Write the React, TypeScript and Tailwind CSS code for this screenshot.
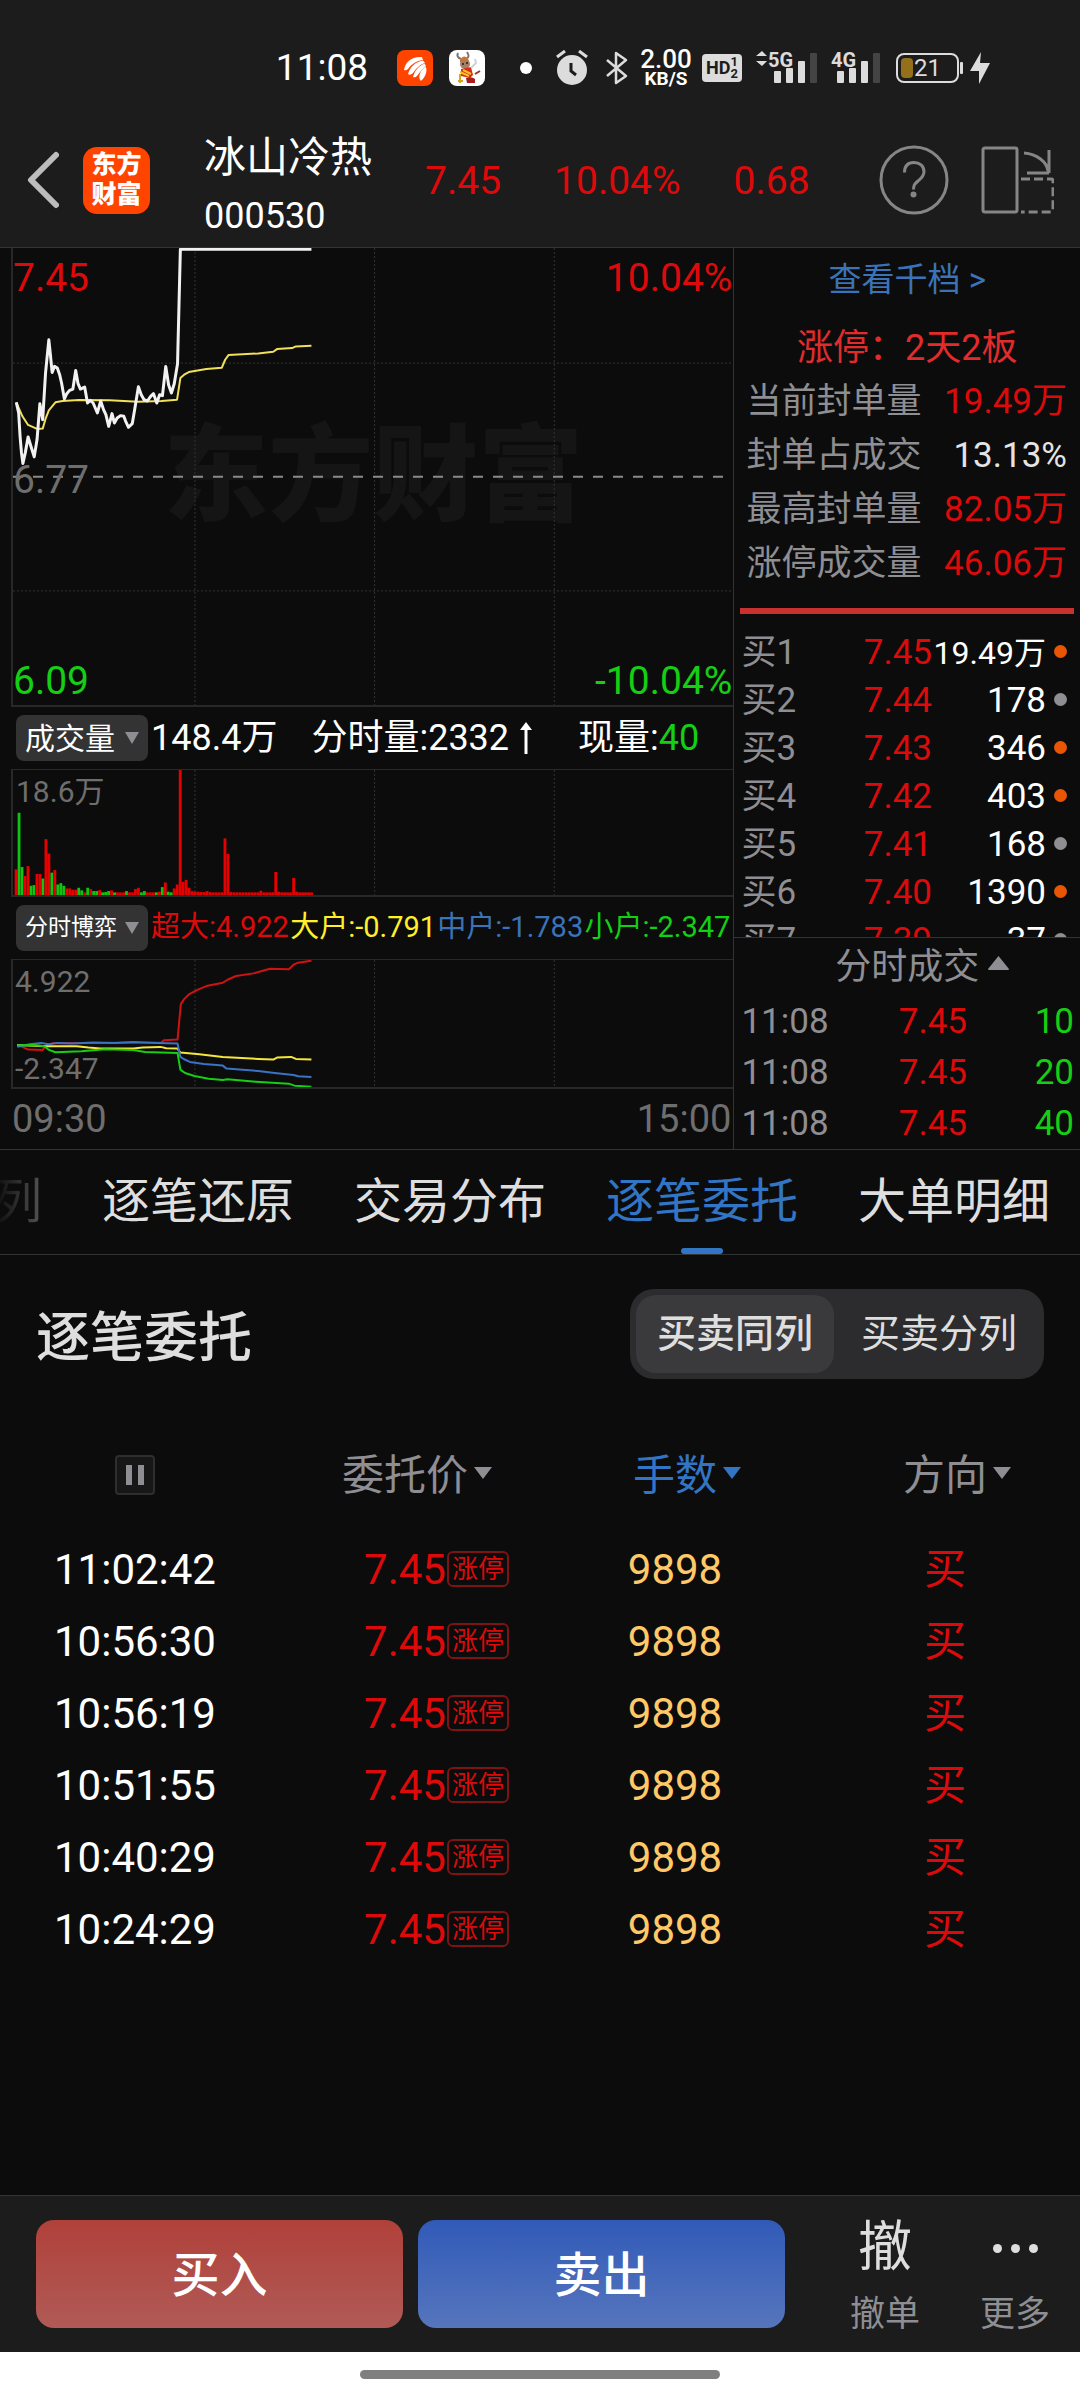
import React, { useState } from "react";

type Point = [number, number];

const PRICE: Point[] = [
  [32, 488], [37, 520], [40, 590], [43, 640], [46, 672], [51, 640], [57, 592], [63, 620], [70, 652], [76, 600],
  [82, 492], [88, 540], [94, 400], [101, 300], [104, 340], [108, 398], [113, 380], [119, 385], [124, 405], [128, 430],
  [134, 478], [139, 462], [145, 452], [152, 448], [158, 392], [163, 432], [168, 448], [177, 442], [183, 490],
  [189, 482], [195, 490], [204, 520], [211, 484], [217, 510], [222, 525], [228, 560], [235, 522], [240, 550],
  [246, 535], [253, 528], [260, 530], [264, 545], [270, 563], [278, 552], [283, 510], [291, 441], [297, 465],
  [303, 480], [310, 484], [317, 470], [323, 462], [330, 490], [336, 465], [342, 468], [349, 380], [355, 435],
  [361, 460], [367, 432], [374, 372], [380, 28], [658, 28],
];

const AVERAGE: Point[] = [
  [32, 488], [45, 530], [57, 556], [76, 568], [88, 567], [94, 538], [101, 512], [115, 488], [130, 484], [165, 481],
  [230, 482], [290, 486], [340, 484], [373, 480], [380, 415], [388, 405], [398, 397], [435, 388], [468, 384],
  [475, 360], [482, 346], [545, 341], [577, 336], [585, 328], [617, 325], [625, 320], [658, 318],
];

const SUPER_LARGE: Point[] = [
  [34, 1062], [45, 1068], [57, 1076], [88, 1077], [95, 1064], [110, 1057], [340, 1055], [345, 1048], [374, 1046],
  [377, 1000], [381, 940], [388, 925], [398, 911], [415, 898], [435, 886], [470, 876], [480, 867], [498, 856],
  [535, 848], [555, 840], [570, 834], [610, 836], [620, 822], [630, 816], [658, 810],
];

const LARGE: Point[] = [
  [34, 1062], [95, 1066], [160, 1066], [185, 1070], [210, 1073], [280, 1073], [300, 1070], [338, 1068], [350, 1072],
  [374, 1073], [380, 1085], [420, 1090], [470, 1098], [510, 1101], [545, 1104], [577, 1106], [585, 1100], [615, 1098],
  [625, 1104], [658, 1106],
];

const MEDIUM: Point[] = [
  [34, 1068], [60, 1060], [85, 1056], [100, 1060], [120, 1056], [150, 1058], [195, 1055], [240, 1056], [280, 1053],
  [330, 1056], [374, 1058], [380, 1098], [388, 1105], [400, 1113], [430, 1119], [470, 1124], [478, 1133], [545, 1140],
  [580, 1146], [620, 1152], [630, 1156], [658, 1158],
];

const SMALL: Point[] = [
  [34, 1063], [70, 1062], [92, 1066], [100, 1076], [115, 1084], [170, 1081], [220, 1075], [280, 1077], [305, 1083],
  [374, 1086], [380, 1136], [390, 1146], [410, 1155], [440, 1163], [470, 1167], [480, 1165], [540, 1172], [610, 1178],
  [622, 1184], [658, 1187],
];

const VOLUME =
  "r78 g250 g85 r58 r88 g28 g30 r64 r64 g50 r170 r126 g68 r76 g32 g36 g28 r20 r20 r16 r16 g22 g14 r8 g22 r18 g12 g12 r15 g8 g9 g12 r14 g8 r8 r8 r8 g12 r8 r8 r18 r22 g8 g12 r8 r8 r8 g8 r10 g24 r38 g10 g8 r20 r32 r380 r40 r46 r22 r12 r10 r10 r9 r9 r12 r9 r8 r8 r8 r8 r172 r125 r9 r8 r8 r8 r8 r8 r8 r8 r8 r8 r13 r8 r8 r8 r8 r70 r10 r8 r8 r8 r8 r52 r10 r8 r8 r8 r8 r8"
    .split(" ")
    .map((s) => ({ up: s[0] === "r", h: Number(s.slice(1)) }));

const SEAL_STATS = [
  { label: "当前封单量", value: "19.49万", tone: "text-[#dc0a0a]" },
  { label: "封单占成交", value: "13.13%", tone: "text-[#e4e4e4]" },
  { label: "最高封单量", value: "82.05万", tone: "text-[#dc0a0a]" },
  { label: "涨停成交量", value: "46.06万", tone: "text-[#dc0a0a]" },
];

const BIDS = [
  { label: "买1", price: "7.45", qty: "19.49万", hot: true },
  { label: "买2", price: "7.44", qty: "178", hot: false },
  { label: "买3", price: "7.43", qty: "346", hot: true },
  { label: "买4", price: "7.42", qty: "403", hot: true },
  { label: "买5", price: "7.41", qty: "168", hot: false },
  { label: "买6", price: "7.40", qty: "1390", hot: true },
  { label: "买7", price: "7.39", qty: "37", hot: false },
];

const TRADES = ["10", "20", "40"];
const ORDERS = ["11:02:42", "10:56:30", "10:56:19", "10:51:55", "10:40:29", "10:24:29"];
const TABS = ["逐笔还原", "交易分布", "逐笔委托", "大单明细"];

const toPoints = (series: Point[]) => series.map((p) => p.join(",")).join(" ");

function Line({ series, color, width = 2 }: { series: Point[]; color: string; width?: number }) {
  return (
    <polyline
      points={toPoints(series)}
      fill="none"
      stroke={color}
      strokeWidth={width}
      strokeLinejoin="round"
      vectorEffect="non-scaling-stroke"
    />
  );
}

function GridColumns({ top, bottom }: { top: number; bottom: number }) {
  return (
    <g stroke="#333333" strokeDasharray="2 2">
      {[411, 792, 1173].map((x) => (
        <line key={x} x1={x} x2={x} y1={top} y2={bottom} vectorEffect="non-scaling-stroke" />
      ))}
    </g>
  );
}

function Caret({ className, up = false }: { className: string; up?: boolean }) {
  return (
    <svg className={className} viewBox="0 0 20 14" preserveAspectRatio="none" fill="currentColor" aria-hidden="true">
      <path d={up ? "M10 0L20 13Q20 14 19 14H1Q0 14 0 13Z" : "M0 0H20L10 14Z"} />
    </svg>
  );
}

function Signal({ label, arrows = false }: { label: string; arrows?: boolean }) {
  return (
    <svg className="h-9 w-[62px] overflow-visible" viewBox="0 0 62 36" fill="#dcdcdc" aria-label={label}>
      {arrows && <path d="M0 6L6 1L11 6ZM0 11H11L6 16Z" />}
      <text x="12" y="17" fontSize="20" fontWeight="700" fontFamily="Roboto, sans-serif">
        {label}
      </text>
      <rect x="18" y="21" width="7" height="12" rx="1" />
      <rect x="30" y="18" width="7" height="15" rx="1" />
      <rect x="42" y="11" width="7" height="22" rx="1" />
      <rect x="54" y="3" width="7" height="30" rx="1" fill="#444444" />
    </svg>
  );
}

function StatusBar() {
  return (
    <div className="flex h-[129px] items-center justify-end pt-[7px] pr-[90px] text-white">
      <span className="text-[37px] leading-10">11:08</span>
      <svg className="ml-[29px] size-9" viewBox="0 0 36 36" aria-hidden="true">
        <rect width="36" height="36" rx="8" fill="#ff4400" />
        <g fill="#fff">
          <path d="M7 20C8 12 15 6 25 7L26 10C18 11 14 15 11 19Q9 21 7 20Z" />
          <path d="M11 24C13 17 18 12 26 10.500L28 13C22 15 19 19 16 23Q13 26 11 24Z" />
          <path d="M16 27C18 20 22 16 27.500 13.500L29 16C25 19 23 22 20 26Q18 28 16 27Z" />
          <path d="M23 30C21 25 24 20 28.500 16.500C31 21 28 27 25 30Q24 31 23 30Z" />
        </g>
      </svg>
      <svg className="ml-4 size-9" viewBox="0 0 36 36" aria-hidden="true">
        <rect width="36" height="36" rx="8" fill="#fff" />
        <path d="M12 9Q7 7 9 3M18 8Q21 7 18 2" stroke="#77767c" strokeWidth="2" fill="none" />
        <path d="M11 10Q14 4 19 8L20 12H11Z" fill="#d8731d" />
        <circle cx="16" cy="14" r="5" fill="#a57f63" />
        <path d="M13 14H15M17 13H19" stroke="#2b1d18" strokeWidth="1.5" />
        <path d="M12 19L22 17L24 25L21 28L12 26Z" fill="#d92a1c" />
        <path d="M11 22L20 26M14 20L22 24" stroke="#f3c325" strokeWidth="2" />
        <path d="M17 28Q23 26 26 29V33H18Z" fill="#a61f1c" />
        <path d="M11 24V33M9 31H14" stroke="#d8a51d" strokeWidth="2" />
        <path d="M22 18L27 13L26 9" stroke="#cfd3d6" strokeWidth="2" fill="none" />
        <path d="M26 24L31 21" stroke="#8b3a2a" strokeWidth="2" />
      </svg>
      <span className="ml-[35px] size-3 rounded-full bg-white" />
      <svg className="ml-6 h-9 w-8" viewBox="0 0 32 36" aria-hidden="true">
        <circle cx="16" cy="20" r="15" fill="#dcdcdc" />
        <path d="M1 7L9 1M31 7L23 1" stroke="#dcdcdc" strokeWidth="3" />
        <path d="M15 13V21L20 25" stroke="#1c1c1c" strokeWidth="3" fill="none" />
      </svg>
      <svg className="ml-[18px] h-9 w-[22px]" viewBox="0 0 22 36" aria-hidden="true">
        <path d="M1 10L20 26L10 33V3L20 10L1 26" stroke="#dcdcdc" strokeWidth="2.5" fill="none" strokeLinejoin="round" />
      </svg>
      <span className="ml-3 flex w-[52px] flex-col items-center font-medium">
        <span className="text-[26px] leading-[22px]">2.00</span>
        <span className="text-[19px] leading-[18px] font-bold">KB/S</span>
      </span>
      <span className="ml-[10px] flex h-7 w-10 items-center justify-center rounded bg-[#dcdcdc] text-[#1c1c1c]">
        <span className="text-[18px] leading-7 font-bold">HD</span>
        <span className="flex flex-col text-[13px] leading-3 font-bold">
          <span>1</span>
          <span>2</span>
        </span>
      </span>
      <span className="ml-[14px] flex gap-[1px]">
        <Signal label="5G" arrows />
        <Signal label="4G" />
      </span>
      <svg className="ml-[15px] h-8 w-[68px]" viewBox="0 0 68 32" aria-label="电量 21">
        <rect x="1" y="2" width="61" height="28" rx="7" fill="none" stroke="#dcdcdc" strokeWidth="2" />
        <rect x="5" y="6" width="12" height="20" rx="4" fill="#94701a" />
        <rect x="64" y="10" width="3" height="12" rx="1" fill="#dcdcdc" />
        <text x="18" y="24" fontSize="24" fill="#dcdcdc" fontFamily="Roboto, sans-serif">
          21
        </text>
      </svg>
      <svg className="ml-[6px] h-8 w-5" viewBox="0 0 20 32" fill="#dcdcdc" aria-hidden="true">
        <path d="M11 0L0 19H9V32L20 11H10Z" />
      </svg>
    </div>
  );
}

function StockHeader() {
  return (
    <header className="flex h-[118px] items-start pr-[26px] pl-[27px]">
      <div className="flex h-[102px] items-center">
        <button type="button" aria-label="返回">
          <svg className="h-[58px] w-8" viewBox="0 0 32 58" fill="none" aria-hidden="true">
            <path d="M29 4L4 29L29 54" stroke="#bcbcbc" strokeWidth="6" strokeLinecap="round" strokeLinejoin="round" />
          </svg>
        </button>
        <div className="ml-6 flex size-[67px] flex-col items-center justify-center rounded-[14px] bg-[#ff4400] text-[25px] leading-[30px] font-black text-white">
          <span>东方</span>
          <span>财富</span>
        </div>
      </div>
      <h1 className="ml-[54px] flex flex-col leading-[58px] text-white">
        <span className="text-[42px]">冰山冷热</span>
        <span className="text-[36px]">000530</span>
      </h1>
      <div className="ml-[53px] flex h-[104px] items-center gap-[53px] text-[39px] text-[#dc0a0a]">
        <span>7.45</span>
        <span>10.04%</span>
        <span>0.68</span>
      </div>
      <div className="ml-auto flex h-[102px] items-center gap-8 text-[#868686]">
        <button type="button" aria-label="帮助">
          <svg className="size-[70px]" viewBox="0 0 70 70" fill="none" stroke="currentColor" strokeWidth="3" aria-hidden="true">
            <circle cx="35" cy="35" r="33" />
            <path d="M25.500 27.500C25.500 20.500 29.500 17.500 35 17.500s10 3.500 10 9c0 5-3 7-6 9.500-3.500 3-4.500 4-4.500 8.500" />
            <circle cx="34.500" cy="49.500" r="3" fill="currentColor" stroke="none" />
          </svg>
        </button>
        <button type="button" aria-label="横屏">
          <svg className="h-[70px] w-[73px]" viewBox="0 0 73 70" fill="none" stroke="currentColor" strokeWidth="3" aria-hidden="true">
            <rect x="2" y="3" width="34" height="64" rx="2" />
            <path d="M43 8C56 9 66 17 67 26M68 5V28M46 28H68" />
            <path d="M40 34H70Q72 34 72 36V65Q72 67 70 67H40" strokeDasharray="9 4" />
          </svg>
        </button>
      </div>
    </header>
  );
}

function IndicatorButton({ label, small = false }: { label: string; small?: boolean }) {
  return (
    <button
      type="button"
      className="flex h-[46px] w-[132px] shrink-0 items-center justify-between rounded-lg bg-[#333333] pr-[9px] pl-[9px] text-white"
    >
      <span className={small ? "text-[23px]" : "text-[30px]"}>{label}</span>
      <Caret className="h-3 w-[14px] text-[#8e8e93]" />
    </button>
  );
}

function Charts() {
  return (
    <section aria-label="分时图" className="flex min-w-0 flex-col border-r border-[#333333]">
      <div className="relative ml-[11px] h-[459px] border-b-2 border-l-2 border-[#282828]">
        <span className="absolute inset-0 flex items-center justify-center text-[105px] leading-none font-black text-[#151515]">
          东方财富
        </span>
        <svg className="absolute inset-0 size-full" viewBox="25 24 1528 1374" preserveAspectRatio="none" aria-hidden="true">
          <GridColumns top={24} bottom={1398} />
          <g stroke="#333333" strokeDasharray="2 2">
            <line x1="25" x2="1553" y1="370" y2="370" vectorEffect="non-scaling-stroke" />
            <line x1="25" x2="1553" y1="1055" y2="1055" vectorEffect="non-scaling-stroke" />
          </g>
          <line x1="25" x2="1553" y1="712" y2="712" stroke="#8a8a8a" strokeWidth="2" strokeDasharray="10 10" vectorEffect="non-scaling-stroke" />
          <Line series={AVERAGE} color="#f0e05a" />
          <Line series={PRICE} color="#f2f2f2" width={3} />
        </svg>
        <div className="absolute inset-0 flex flex-col justify-between pt-[6px] pr-[1px] text-[39px] leading-[48px]">
          <div className="flex justify-between text-[#dc0a0a]">
            <span>7.45</span>
            <span>10.04%</span>
          </div>
          <div className="text-[#6e6e6e]">6.77</div>
          <div className="flex justify-between text-[#14cf14]">
            <span>6.09</span>
            <span>-10.04%</span>
          </div>
        </div>
      </div>

      <div className="flex h-[62px] items-center gap-[3px] pl-4 text-[36px] text-white">
        <IndicatorButton label="成交量" />
        <span>148.4万</span>
        <span className="ml-[31px] flex items-center">
          分时量:2332
          <svg className="ml-[10px] h-8 w-[14px]" viewBox="0 0 14 32" fill="none" aria-hidden="true">
            <path d="M7 32V4" stroke="#fff" strokeWidth="3" />
            <path d="M7 0L13 8H1Z" fill="#fff" />
          </svg>
        </span>
        <span className="ml-[42px]">
          现量:<span className="text-[#14cf14]">40</span>
        </span>
      </div>

      <div className="relative ml-[11px] h-[128px] border-t border-b-2 border-l-2 border-[#282828]">
        <svg className="absolute inset-0 size-full" viewBox="25 238 1528 380" preserveAspectRatio="none" aria-hidden="true">
          <GridColumns top={238} bottom={618} />
          {VOLUME.map((bar, i) => (
            <rect key={i} x={28.500 + i * 6.330} y={618 - bar.h} width="6" height={bar.h} fill={bar.up ? "#e60000" : "#10c410"} />
          ))}
        </svg>
        <span className="absolute top-1 left-[3px] text-[30px] leading-9 text-[#6e6e6e]">18.6万</span>
      </div>

      <div className="flex h-[62px] items-center gap-[3px] pl-4 text-[29px]">
        <IndicatorButton label="分时博弈" small />
        <div className="flex grow justify-between pr-[3px] whitespace-nowrap">
          <span className="text-[#dc0a0a]">超大:4.922</span>
          <span className="text-[#fff02a]">大户:-0.791</span>
          <span className="text-[#3b73b9]">中户:-1.783</span>
          <span className="text-[#14cf14]">小户:-2.347</span>
        </div>
      </div>

      <div className="relative ml-[11px] h-[130px] border-t border-b-2 border-l-2 border-[#282828]">
        <svg className="absolute inset-0 size-full" viewBox="25 808 1528 380" preserveAspectRatio="none" aria-hidden="true">
          <GridColumns top={808} bottom={1188} />
          <Line series={SUPER_LARGE} color="#cf1212" />
          <Line series={LARGE} color="#f5e63a" />
          <Line series={MEDIUM} color="#3b73c4" />
          <Line series={SMALL} color="#14cf14" />
        </svg>
        <div className="absolute inset-0 flex flex-col justify-between pt-1 pl-[2px] text-[30px] leading-9 text-[#6e6e6e]">
          <span>4.922</span>
          <span>-2.347</span>
        </div>
      </div>

      <div className="flex h-[60px] items-center justify-between pr-[2px] pl-3 text-[38px] text-[#6e6e6e]">
        <span>09:30</span>
        <span>15:00</span>
      </div>
    </section>
  );
}

function DepthPanel() {
  return (
    <section aria-label="盘口" className="flex min-w-0 flex-col text-[35px]">
      <a href="#depth" className="mt-[5px] text-center text-[33px] leading-[54px] text-[#3b73b9]">
        查看千档 &gt;
      </a>
      <p className="mt-[14px] text-center text-[36px] leading-[54px] text-[#e22b2b]">涨停：2天2板</p>
      <dl className="pr-[13px] pl-3">
        {SEAL_STATS.map((s) => (
          <div key={s.label} className="flex justify-between leading-[54px]">
            <dt className="text-[#8e8e93]">{s.label}</dt>
            <dd className={s.tone}>{s.value}</dd>
          </div>
        ))}
      </dl>
      <div className="mx-[6px] mt-[17px] h-[6px] bg-[#c93030]" />
      <div className="mt-[15px] h-[309px] overflow-hidden border-b border-[#333333] pr-[13px] pl-[7px]">
        <table className="w-full">
          <tbody>
            {BIDS.map((b) => (
              <tr key={b.label} className="h-12 leading-[48px]">
                <th scope="row" className="text-left font-normal text-[#8e8e93]">{b.label}</th>
                <td className="text-right text-[#dc0a0a]">{b.price}</td>
                <td className={b.qty.length > 5 ? "w-[114px] text-right text-[32px] text-white" : "w-[114px] text-right text-white"}>
                  {b.qty}
                </td>
                <td className="w-[21px]">
                  <span className={b.hot ? "mb-1 ml-auto block size-[13px] rounded-full bg-[#ea5504]" : "mb-1 ml-auto block size-[13px] rounded-full bg-[#8e8e93]"} />
                </td>
              </tr>
            ))}
          </tbody>
        </table>
      </div>
      <button type="button" className="flex h-[58px] items-center justify-center gap-[9px] pl-[30px] text-[36px] text-[#8e8e93]">
        分时成交
        <Caret up className="mb-2 h-[14px] w-[21px]" />
      </button>
      <table className="mr-[6px] ml-[7px]">
        <tbody>
          {TRADES.map((qty) => (
            <tr key={qty} className="h-[51px] leading-[51px]">
              <td className="text-[#8e8e93]">11:08</td>
              <td className="text-right text-[#dc0a0a]">7.45</td>
              <td className="w-[107px] text-right text-[#14cf14]">{qty}</td>
            </tr>
          ))}
        </tbody>
      </table>
    </section>
  );
}

function Tabs() {
  const [active, setActive] = useState("逐笔委托");
  return (
    <nav className="flex h-[105px] gap-[60px] overflow-hidden border-b border-[#333333] text-[48px]">
      <button type="button" className="flex w-[42px] shrink-0 items-center justify-end bg-linear-to-r from-[#141414] to-[#555555] bg-clip-text text-transparent">
        列
      </button>
      {TABS.map((t) => (
        <button
          key={t}
          type="button"
          onClick={() => setActive(t)}
          className={t === active ? "relative shrink-0 text-[#3275c4]" : "relative shrink-0 text-[#dedede]"}
        >
          {t}
          {t === active && <span className="absolute bottom-0 left-1/2 h-[6px] w-[42px] -translate-x-1/2 rounded-full bg-[#3275c4]" />}
        </button>
      ))}
    </nav>
  );
}

function SortHeader({ label, active = false }: { label: string; active?: boolean }) {
  return (
    <th className="font-normal">
      <button type="button" className={active ? "relative text-[#3275c4]" : "relative text-[#8e8e93]"}>
        {label}
        <Caret className="absolute top-1/2 left-full ml-[6px] h-3 w-[18px] -translate-y-2" />
      </button>
    </th>
  );
}

function Orders() {
  const [merged, setMerged] = useState(true);
  const on = "h-[78px] w-[198px] rounded-[20px] bg-[#3a3a3c] font-medium";
  const off = "h-[78px] w-[198px] rounded-[20px]";
  return (
    <section className="grow">
      <div className="flex h-[158px] items-center justify-between pr-9 pl-9 text-[#dedede]">
        <h2 className="pt-2 text-[54px] font-medium">逐笔委托</h2>
        <div className="flex h-[90px] items-center gap-[6px] rounded-[24px] bg-[#2c2c2e] px-[6px] text-[39px]">
          <button type="button" aria-pressed={merged} className={merged ? on : off} onClick={() => setMerged(true)}>
            买卖同列
          </button>
          <button type="button" aria-pressed={!merged} className={merged ? off : on} onClick={() => setMerged(false)}>
            买卖分列
          </button>
        </div>
      </div>
      <table className="mt-[26px] w-full table-fixed text-center text-[42px]">
        <thead>
          <tr className="h-[72px]">
            <th>
              <button
                type="button"
                aria-label="暂停"
                className="mx-auto flex size-10 items-center justify-center gap-[6px] rounded border-2 border-[#2e2e2e] bg-[#171717]"
              >
                <span className="h-5 w-[6px] bg-[#8e8e93]" />
                <span className="h-5 w-[6px] bg-[#8e8e93]" />
              </button>
            </th>
            <SortHeader label="委托价" />
            <SortHeader label="手数" active />
            <SortHeader label="方向" />
          </tr>
          <tr className="h-[22px]" />
        </thead>
        <tbody>
          {ORDERS.map((time) => (
            <tr key={time} className="h-[72px]">
              <td className="text-white">{time}</td>
              <td className="text-[#dc0a0a]">
                <span className="relative">
                  7.45
                  <span className="absolute top-1/2 left-full ml-[1px] flex h-9 w-[62px] -translate-y-1/2 items-center justify-center rounded-md border-2 border-[#7d1414] text-[26px] whitespace-nowrap">
                    涨停
                  </span>
                </span>
              </td>
              <td className="text-[#ffc868]">9898</td>
              <td className="text-[#dc0a0a]">买</td>
            </tr>
          ))}
        </tbody>
      </table>
    </section>
  );
}

function TradeBar() {
  return (
    <footer>
      <div className="flex h-[157px] items-start border-t border-[#333333] bg-[#1c1c1c] pt-6 pl-9">
        <div className="mr-[35px] flex grow gap-[15px] text-[48px] font-medium text-white">
          <button type="button" className="h-[108px] flex-1 rounded-[18px] bg-linear-to-b from-[#b0403a] to-[#b05a56] pt-1">
            买入
          </button>
          <button type="button" className="h-[108px] flex-1 rounded-[18px] bg-linear-to-b from-[#315ab8] to-[#5675bc] pt-1">
            卖出
          </button>
        </div>
        <button type="button" className="flex w-[130px] flex-col items-center text-[#dedede]">
          <span className="text-[54px] leading-[56px]">撤</span>
          <span className="mt-3 text-[35px] leading-[54px] text-[#8e8e93]">撤单</span>
        </button>
        <button type="button" className="flex w-[130px] flex-col items-center text-[#dedede]">
          <span className="flex h-[56px] items-center gap-[9px]">
            <span className="size-[9px] rounded-full bg-[#dedede]" />
            <span className="size-[9px] rounded-full bg-[#dedede]" />
            <span className="size-[9px] rounded-full bg-[#dedede]" />
          </span>
          <span className="mt-3 text-[35px] leading-[54px] text-[#8e8e93]">更多</span>
        </button>
      </div>
      <div className="flex h-12 items-start justify-center bg-white pt-[18px]">
        <span className="h-[9px] w-1/3 rounded-full bg-[#7f7f7f]" />
      </div>
    </footer>
  );
}

export default function App() {
  return (
    <div className="flex min-h-screen flex-col bg-[#0c0c0c] font-['Roboto','Noto_Sans_CJK_SC',sans-serif]">
      <div className="border-b border-[#333333] bg-[#1c1c1c]">
        <StatusBar />
        <StockHeader />
      </div>
      <main className="flex grow flex-col">
        <div className="grid grid-cols-[68%_32%] border-b border-[#333333]">
          <Charts />
          <DepthPanel />
        </div>
        <Tabs />
        <Orders />
      </main>
      <TradeBar />
    </div>
  );
}
